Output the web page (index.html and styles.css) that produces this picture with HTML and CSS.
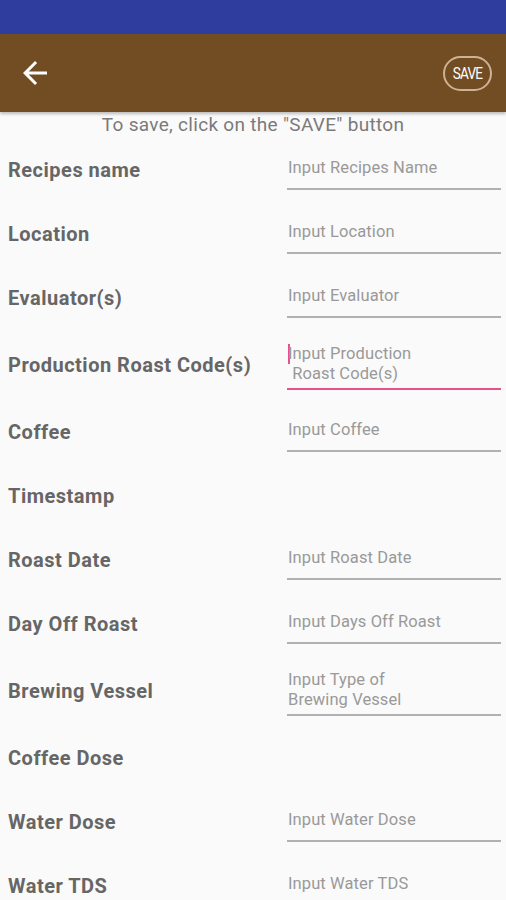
FILE: index.html
```html
<!DOCTYPE html>
<html lang="en">
<head>
    <meta charset="UTF-8">
    <title>Recipe</title>
    <link rel="stylesheet" href="styles.css">
</head>
<body>

    <div class="statusbar"></div>

    <div class="toolbar">
        <svg class="back" viewBox="0 0 24 24" width="36" height="36">
            <path d="M20 11H7.83l5.59-5.59L12 4l-8 8 8 8 1.41-1.41L7.83 13H20v-2z" fill="#ffffff"/>
        </svg>
        <div class="savebtn"><span>SAVE</span></div>
    </div>

    <p class="hint">To save, click on the "SAVE" button</p>

    <div class="form">
        <div class="row">
            <div class="label">Recipes name</div>
            <div class="field">Input Recipes Name</div>
        </div>
        <div class="row">
            <div class="label">Location</div>
            <div class="field">Input Location</div>
        </div>
        <div class="row">
            <div class="label">Evaluator(s)</div>
            <div class="field">Input Evaluator</div>
        </div>
        <div class="row tall">
            <div class="label">Production Roast Code(s)</div>
            <div class="field two focus"><span class="caret"></span>Input Production<br>&nbsp;Roast Code(s)</div>
        </div>
        <div class="row">
            <div class="label">Coffee</div>
            <div class="field">Input Coffee</div>
        </div>
        <div class="row">
            <div class="label">Timestamp</div>
        </div>
        <div class="row">
            <div class="label">Roast Date</div>
            <div class="field">Input Roast Date</div>
        </div>
        <div class="row">
            <div class="label">Day Off Roast</div>
            <div class="field">Input Days Off Roast</div>
        </div>
        <div class="row tall">
            <div class="label">Brewing Vessel</div>
            <div class="field two">Input Type of<br>Brewing Vessel</div>
        </div>
        <div class="row">
            <div class="label">Coffee Dose</div>
        </div>
        <div class="row">
            <div class="label">Water Dose</div>
            <div class="field">Input Water Dose</div>
        </div>
        <div class="row">
            <div class="label">Water TDS</div>
            <div class="field">Input Water TDS</div>
        </div>
    </div>

</body>
</html>
```

FILE: styles.css
```css
body{
    margin: 0;
    background-color: #fafafa;
    font-family: Roboto, "Liberation Sans", sans-serif;
    overflow: hidden;
}

.statusbar{
    height: 34px;
    background-color: #2f3d9e;
}

.toolbar{
    height: 78px;
    background-color: #724c22;
    display: flex;
    align-items: center;
    justify-content: space-between;
    padding: 0 14px 0 17px;
    box-shadow: 0 2px 3px rgba(0,0,0,0.25);
}

.back{
    display: block;
}

.savebtn{
    width: 45px; height: 31px;
    border: 2px solid #cdb294;
    border-radius: 18px;
    color: #ffffff;
    font-size: 17px;
    display: flex;
    align-items: center;
    justify-content: center;
}

.savebtn span{
    letter-spacing: -1px;
    transform: scaleX(0.8);
}

.hint{
    margin: 0;
    height: 26px;
    line-height: 26px;
    text-align: center;
    font-size: 19px;
    letter-spacing: 0.3px;
    color: #7a7a7a;
}

.row{
    display: flex;
    align-items: center;
    justify-content: space-between;
    min-height: 64px;
    padding: 0 5px 0 8px;
}

.row.tall{
    min-height: 70px;
}

.label{
    font-size: 20px;
    font-weight: bold;
    letter-spacing: 0.5px;
    color: #666666;
}

.field{
    width: 214px;
    box-sizing: border-box;
    padding: 8px 0 10px 1px;
    line-height: 20px;
    font-size: 16.5px;
    letter-spacing: 0.1px;
    color: #999999;
    border-bottom: 2px solid #b0b0b0;
}

.field.two{
    padding: 4px 0 4px 1px;
}

.field.focus{
    border-bottom-color: #e8508a;
}

.caret{
    display: inline-block;
    width: 2px; height: 20px;
    margin-right: -2px;
    vertical-align: top;
    background-color: #e8508a;
}
```
